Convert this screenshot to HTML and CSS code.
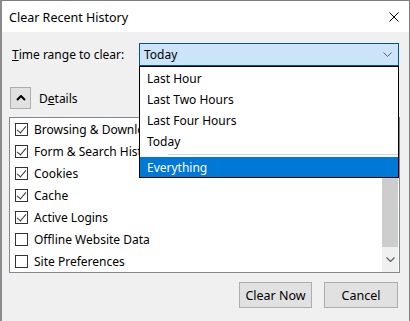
FILE: index.html
```html
<!DOCTYPE html>
<html>
<head>
<meta charset="utf-8">
<link rel="stylesheet" href="styles.css">
</head>
<body>
<div class="window">
  <div class="titlebar">
    <span class="title">Clear Recent History</span>
    <svg class="close" width="10" height="10" viewBox="0 0 10 10"><path d="M0.5 0.5 L9.5 9.5 M9.5 0.5 L0.5 9.5" stroke="#000" stroke-width="1" fill="none"/></svg>
  </div>
  <div class="content">
    <div class="range-row">
      <span class="label"><u>T</u>ime range to clear:</span>
      <div class="select">
        <span>Today</span>
        <svg class="chev" width="9" height="5" viewBox="0 0 9 5"><path d="M0.5 0.5 L4.5 4.5 L8.5 0.5" stroke="#606060" stroke-width="1" fill="none"/></svg>
        <div class="dropdown">
          <div class="opt">Last Hour</div>
          <div class="opt">Last Two Hours</div>
          <div class="opt">Last Four Hours</div>
          <div class="opt">Today</div>
          <div class="sep"></div>
          <div class="opt sel">Everything</div>
        </div>
      </div>
    </div>
    <div class="details-row">
      <div class="dbtn"><svg width="10" height="6" viewBox="0 0 10 6"><path d="M1 5 L5 1 L9 5" stroke="#000" stroke-width="2" fill="none"/></svg></div>
      <span class="dlabel">D<u>e</u>tails</span>
    </div>
    <div class="listbox">
      <div class="items">
        <div class="item"><span class="cb on"></span>Browsing &amp; Download History</div>
        <div class="item"><span class="cb on"></span>Form &amp; Search History</div>
        <div class="item"><span class="cb on"></span>Cookies</div>
        <div class="item"><span class="cb on"></span>Cache</div>
        <div class="item"><span class="cb on"></span>Active Logins</div>
        <div class="item"><span class="cb"></span>Offline Website Data</div>
        <div class="item"><span class="cb"></span>Site Preferences</div>
      </div>
      <div class="scrollbar">
        <div class="thumb"></div>
        <div class="arrow"><svg width="9" height="5" viewBox="0 0 9 5"><path d="M0.5 0.5 L4.5 4.5 L8.5 0.5" stroke="#606060" stroke-width="1.2" fill="none"/></svg></div>
      </div>
    </div>
    <div class="buttons">
      <div class="btn clear">Clear Now</div>
      <div class="btn cancel">Cancel</div>
    </div>
  </div>
</div>
</body>
</html>
```
FILE: styles.css
```css
* { box-sizing: border-box; }
html, body { margin: 0; padding: 0; }
body {
  width: 410px;
  height: 321px;
  overflow: hidden;
  font-family: "Noto Sans", "Open Sans", sans-serif;
  font-size: 12px;
  color: #000;
}
.window {
  width: 410px;
  height: 321px;
  border: 1px solid #7f7f7f;
  border-bottom: none;
  border-left: 2px solid #8a8a8a;
  display: flex;
  flex-direction: column;
  background: #f0f0f0;
}
.titlebar {
  height: 31px;
  background: #fff;
  display: flex;
  align-items: center;
  justify-content: space-between;
  padding: 0 10px 0 7px;
  flex: none;
}
.title { font-size: 12.5px; position: relative; top: 1px; }
.close { display: block; }
.content {
  flex: 1;
  padding: 11px 10px 0 7px;
  display: flex;
  flex-direction: column;
}
.range-row {
  display: flex;
  align-items: center;
  height: 23px;
}
.label { width: 130px; padding-left: 3px; }
.select {
  position: relative;
  width: 260px;
  height: 23px;
  background: #cce4f7;
  border: 1px solid #005499;
  display: flex;
  align-items: center;
  justify-content: space-between;
  padding: 0 6px 0 4px;
}
.chev { display: block; }
.dropdown {
  position: absolute;
  left: -1px;
  top: 22px;
  width: 260px;
  height: 112px;
  background: #fff;
  border: 1px solid #000;
  padding-top: 1px;
  z-index: 2;
}
.opt {
  height: 21px;
  line-height: 22px;
  padding-left: 7px;
}
.sep {
  height: 1px;
  background: #d7d7d7;
  margin: 2px 0 2px 28px;
}
.opt.sel {
  background: #0078d7;
  color: #fff;
  height: 20px;
  line-height: 21px;
}
.details-row {
  display: flex;
  align-items: center;
  margin-top: 21px;
  height: 22px;
}
.dbtn {
  width: 21px;
  height: 22px;
  margin-left: 1px;
  background: #e1e1e1;
  border: 1px solid #adadad;
  display: flex;
  align-items: center;
  justify-content: center;
}
.dbtn svg { display: block; }
.dlabel { margin-left: 8px; }
.listbox {
  margin-top: 8px;
  height: 156px;
  width: 391px;
  background: #fff;
  border: 1px solid #828790;
  display: flex;
}
.items {
  flex: 1;
  overflow: hidden;
}
.item {
  height: 22px;
  display: flex;
  align-items: center;
  white-space: nowrap;
  padding-left: 5px;
}
.cb {
  width: 13px;
  height: 13px;
  border: 1px solid #333;
  background: #fff;
  margin-right: 6px;
  flex: none;
  position: relative;
}
.cb.on::after {
  content: "";
  position: absolute;
  left: 3px;
  top: 0px;
  width: 4px;
  height: 8px;
  border-right: 1px solid #333;
  border-bottom: 1px solid #333;
  transform: rotate(40deg);
}
.scrollbar {
  width: 16px;
  background: #f0f0f0;
  display: flex;
  flex-direction: column;
  flex: none;
  margin-right: 1px;
}
.thumb {
  height: 129px;
  background: #cdcdcd;
}
.arrow {
  flex: 1;
  display: flex;
  align-items: center;
  justify-content: center;
  background: #f0f0f0;
}
.arrow svg { display: block; }
.buttons {
  display: flex;
  justify-content: flex-end;
  gap: 12px;
  margin-top: 9px;
  padding-right: 1px;
}
.btn {
  height: 26px;
  background: #e1e1e1;
  border: 1px solid #adadad;
  display: flex;
  align-items: center;
  justify-content: center;
  font-size: 12.5px;
}
.clear { width: 73px; }
.cancel { width: 74px; }
```
